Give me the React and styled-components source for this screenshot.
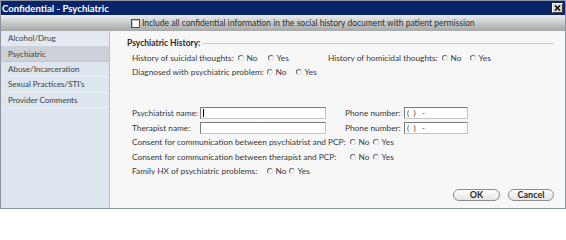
import React from 'react';
import styled, { createGlobalStyle } from 'styled-components';

const GlobalStyle = createGlobalStyle`
  * { box-sizing: border-box; }
  body {
    margin: 0;
    background: #ffffff;
    font-family: "Segoe UI", Lato, "Liberation Sans", sans-serif;
    font-size: 8.3px;
    color: #383838;
  }
`;

const Window = styled.div`
  width: 566px;
  height: 209px;
  border: 1px solid #8d96a0;
  display: flex;
  flex-direction: column;
  background: #f7f7f7;
`;

const TitleBar = styled.div`
  height: 14px;
  flex: none;
  background: #0a246a;
  color: #ffffff;
  font-weight: bold;
  font-size: 9.6px;
  display: flex;
  align-items: center;
  justify-content: space-between;
  padding: 0 2px 0 1px;
`;

const CloseBox = styled.div`
  width: 11px;
  height: 10px;
  background: #d8d6d0;
  border: 1px solid;
  border-color: #ffffff #404040 #404040 #ffffff;
  display: flex;
  align-items: center;
  justify-content: center;
`;

const PermissionStrip = styled.div`
  height: 16px;
  flex: none;
  background: linear-gradient(#ececec, #a4a8a7);
  display: flex;
  align-items: center;
  gap: 2px;
  padding-left: 130px;
  color: #2e2e2e;
  font-size: 8.5px;
`;

const CheckBox = styled.span`
  width: 9px;
  height: 9px;
  background: #ffffff;
  border: 1px solid #505050;
  box-shadow: inset 1px 1px 0 #c8c8c8;
`;

const Body = styled.div`
  flex: 1;
  display: flex;
  min-height: 0;
`;

const Sidebar = styled.div`
  width: 109px;
  flex: none;
  background: #dde5ee;
  border-right: 1px solid #b9c2cc;
  font-size: 8px;
`;

const NavItem = styled.div`
  height: 15.4px;
  display: flex;
  align-items: center;
  padding-left: 7px;
  color: #3c3c3c;
  border-bottom: 1px solid ${p => (p.$active ? '#c4c8ce' : '#e8edf3')};
  background: ${p => (p.$active ? '#cdd1d7' : p.$hover ? '#e3e9f1' : 'transparent')};
`;

const Main = styled.div`
  flex: 1;
  display: flex;
  flex-direction: column;
  padding: 6px 11px 0 17px;
`;

const SectionHeader = styled.div`
  height: 12px;
  display: flex;
  align-items: center;
  gap: 3px;
  font-weight: bold;
  font-size: 8.5px;
  color: #2a2a2a;
  &::after {
    content: '';
    flex: 1;
    height: 1px;
    background: #c9c9c9;
  }
`;

const Fields = styled.div`
  padding-left: 5px;
  display: flex;
  flex-direction: column;
`;

const Row = styled.div`
  height: ${p => p.$h || 14}px;
  margin-top: ${p => p.$mt || 0}px;
  display: flex;
  align-items: center;
  white-space: nowrap;
`;

const Question = styled.div`
  width: ${p => (p.$w ? `${p.$w}px` : 'auto')};
  display: flex;
  align-items: center;
`;

const Label = styled.span`
  width: ${p => p.$w}px;
  flex: none;
`;

const Option = styled.span`
  width: ${p => p.$w}px;
  flex: none;
  display: flex;
  align-items: center;
  gap: 2.5px;
`;

const RadioDot = styled.span`
  width: 6px;
  height: 6px;
  flex: none;
  border-radius: 50%;
  background: #ffffff;
  border: 1px solid;
  border-color: #6a6a6a #dedede #dedede #6a6a6a;
`;

const TextBox = styled.div`
  width: ${p => p.$w}px;
  height: 12px;
  flex: none;
  background: #ffffff;
  border: 1px solid;
  border-color: #7a7a7a #c4c4c4 #c4c4c4 #7a7a7a;
  padding-left: 2px;
  display: flex;
  align-items: center;
  color: #404040;
  position: relative;
  ${p => p.$caret && `
    &::before {
      content: '';
      position: absolute;
      left: 2px;
      top: 1px;
      bottom: 1px;
      width: 1px;
      background: #000;
    }
  `}
`;

const Spacer = styled.span`
  width: ${p => p.$w}px;
  flex: none;
`;

const Footer = styled.div`
  margin-top: 10px;
  display: flex;
  justify-content: flex-end;
  gap: 8px;
`;

const PillButton = styled.button`
  width: ${p => p.$w}px;
  height: 12px;
  padding: 0;
  border: 1px solid #8c8c8c;
  border-radius: 6px;
  background: linear-gradient(#ffffff, #e4e4e4);
  font-family: inherit;
  font-size: 9px;
  font-weight: bold;
  color: #2a2a2a;
  line-height: 10px;
`;

function Radios({ labels, w }) {
  return labels.map(l => (
    <Option key={l} $w={w}>
      <RadioDot />
      {l}
    </Option>
  ));
}

const nav = ['Alcohol/Drug', 'Psychiatric', 'Abuse/Incarceration', "Sexual Practices/STI's", 'Provider Comments'];

export default function App() {
  return (
    <>
      <GlobalStyle />
      <Window>
        <TitleBar>
          <span>Confidential - Psychiatric</span>
          <CloseBox>
            <svg width="7" height="6" viewBox="0 0 7 6">
              <path d="M1 0.5 L6 5.5 M6 0.5 L1 5.5" stroke="#111" strokeWidth="1.6" />
            </svg>
          </CloseBox>
        </TitleBar>
        <PermissionStrip>
          <CheckBox />
          <span>Include all confidential information in the social history document with patient permission</span>
        </PermissionStrip>
        <Body>
          <Sidebar>
            {nav.map((n, i) => (
              <NavItem key={n} $active={i === 1} $hover={i === 0}>{n}</NavItem>
            ))}
          </Sidebar>
          <Main>
            <SectionHeader>Psychiatric History:</SectionHeader>
            <Fields>
              <Row $mt={2}>
                <Question $w={196}>
                  <Label $w={106}>History of suicidal thoughts:</Label>
                  <Radios labels={['No', 'Yes']} w={30} />
                </Question>
                <Question>
                  <Label $w={114}>History of homicidal thoughts:</Label>
                  <Radios labels={['No', 'Yes']} w={28} />
                </Question>
              </Row>
              <Row>
                <Question>
                  <Label $w={135}>Diagnosed with psychiatric problem:</Label>
                  <Radios labels={['No', 'Yes']} w={29} />
                </Question>
              </Row>
              <Row $h={15} $mt={26}>
                <Label $w={68}>Psychiatrist name:</Label>
                <TextBox $w={126} $caret />
                <Spacer $w={19} />
                <Label $w={59}>Phone number:</Label>
                <TextBox $w={64}>(&nbsp;&nbsp;)&nbsp;&nbsp;&nbsp;-</TextBox>
              </Row>
              <Row $h={15}>
                <Label $w={68}>Therapist name:</Label>
                <TextBox $w={126} />
                <Spacer $w={19} />
                <Label $w={59}>Phone number:</Label>
                <TextBox $w={64}>(&nbsp;&nbsp;)&nbsp;&nbsp;&nbsp;-</TextBox>
              </Row>
              <Row $h={14.5}>
                <Label $w={218}>Consent for communication between psychiatrist and PCP:</Label>
                <Radios labels={['No', 'Yes']} w={23} />
              </Row>
              <Row $h={14.5}>
                <Label $w={218}>Consent for communication between therapist and PCP:</Label>
                <Radios labels={['No', 'Yes']} w={23} />
              </Row>
              <Row $h={14.5}>
                <Label $w={135}>Family HX of psychiatric problems:</Label>
                <Radios labels={['No', 'Yes']} w={22} />
              </Row>
            </Fields>
            <Footer>
              <PillButton $w={47}>OK</PillButton>
              <PillButton $w={46}>Cancel</PillButton>
            </Footer>
          </Main>
        </Body>
      </Window>
    </>
  );
}
